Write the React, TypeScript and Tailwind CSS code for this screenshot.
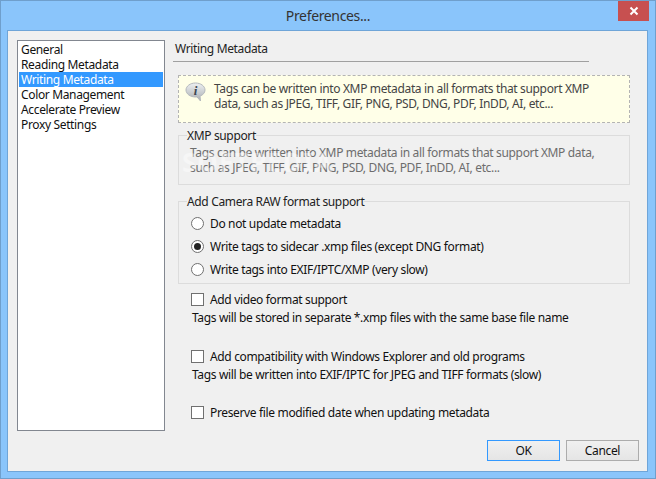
const navItems = [
  'General',
  'Reading Metadata',
  'Writing Metadata',
  'Color Management',
  'Accelerate Preview',
  'Proxy Settings',
];

function InfoIcon() {
  return (
    <svg width="21" height="20" viewBox="0 0 21 20" className="shrink-0 mt-[1px]">
      <defs>
        <linearGradient id="bubble" x1="0" y1="0" x2="0" y2="1">
          <stop offset="0" stopColor="#eef0f2" />
          <stop offset="1" stopColor="#a9aeb3" />
        </linearGradient>
      </defs>
      <path
        d="M10.5 1C5.3 1 1 4.1 1 8s4.3 7 9.5 7c.6 0 1 0 1.500-.1L15.500 19l-.5-4.900C18 13 20 10.700 20 8c0-3.900-4.300-7-9.500-7z"
        fill="url(#bubble)"
        stroke="#b4b8bc"
        strokeWidth="1"
      />
      <text x="10.500" y="13" textAnchor="middle" fontFamily="'Liberation Serif', serif" fontStyle="italic" fontWeight="700" fontSize="13" fill="#3c4650">
        i
      </text>
    </svg>
  );
}

function Radio({ label, checked }: { label: string; checked?: boolean }) {
  return (
    <div className="flex items-center h-[23px]">
      <div className="w-[13px] h-[13px] rounded-full border border-[#707070] bg-white flex items-center justify-center">
        {checked && <div className="w-[7px] h-[7px] rounded-full bg-[#222222]" />}
      </div>
      <span className="ml-[6px] text-[#111111]">{label}</span>
    </div>
  );
}

function Check({ label, className }: { label: string; className?: string }) {
  return (
    <div className={`flex items-center h-[16px] ml-[18px] ${className ?? ''}`}>
      <div className="w-[13px] h-[13px] border border-[#707070] bg-white" />
      <span className="ml-[6px] text-[#111111]">{label}</span>
    </div>
  );
}

export default function App() {
  return (
    <div className="relative w-[656px] h-[479px] bg-[#8ac5fb] border border-[#6f9fcc] flex flex-col overflow-hidden font-['Noto_Sans','Open_Sans',sans-serif] text-[12px] leading-[15px] tracking-[-0.35px] text-[#111111]">
      {/* Title bar */}
      <div className="h-[29px] shrink-0 relative flex items-center justify-center text-[14px] text-[#333333]">
        Preferences...
        <div className="absolute right-[6px] top-0 w-[31px] h-[20px] bg-[#c75050] flex items-center justify-center">
          <svg width="10" height="10" viewBox="0 0 10 10">
            <path d="M1.500 1.500l7 7M8.500 1.500l-7 7" stroke="#fff" strokeWidth="2" />
          </svg>
        </div>
      </div>

      {/* Client area */}
      <div className="ml-[6px] mr-[7px] h-[442px] bg-[#f0f0f0] border border-[#6fa5d8] flex pl-[9px] pt-[9px]">
        <div className="w-[148px] h-[391px] border border-[#828790] bg-white pt-[1px] px-[1px] shrink-0">
          {navItems.map((item) => (
            <div
              key={item}
              className={`h-[15px] pl-[2px] ${item === 'Writing Metadata' ? 'bg-[#3399ff] text-white' : ''}`}
            >
              {item}
            </div>
          ))}
        </div>

        <div className="ml-[8px] w-[466px] flex flex-col">
          {/* Section heading */}
          <div className="h-[22px] w-[416px] border-b border-[#a0a0a0] pl-[2px] pt-[1px] text-[#222222]">
            Writing Metadata
          </div>

          {/* Info box */}
          <div className="ml-[5px] mt-[13px] w-[452px] h-[48px] border border-dashed border-[#b4b4b4] bg-[#ffffe8] flex pl-[6px] pt-[5px] text-[#444444]">
            <InfoIcon />
            <div className="ml-[8px]">
              Tags can be written into XMP metadata in all formats that support XMP
              <br />
              data, such as JPEG, TIFF, GIF, PNG, PSD, DNG, PDF, InDD, AI, etc...
            </div>
          </div>

          {/* XMP support */}
          <fieldset className="relative ml-[5px] mt-[5px] w-[452px] h-[57px] border border-[#dcdcdc] px-[8px] text-[#6d6d6d]">
            <legend className="text-[#222222]">XMP support</legend>
            <div className="ml-[3px] mt-[2px]">
              Tags can be written into XMP metadata in all formats that support XMP data,
              <br />
              such as JPEG, TIFF, GIF, PNG, PSD, DNG, PDF, InDD, AI, etc...
            </div>
            <span className="absolute left-[3px] top-[6px] text-[26px] leading-[26px] font-bold tracking-[1px] text-white opacity-40">
              SOFTPEDIA
            </span>
          </fieldset>

          {/* Camera RAW */}
          <fieldset className="ml-[5px] mt-[9px] w-[452px] h-[90px] border border-[#dcdcdc] px-[12px]">
            <legend className="-ml-[4px] text-[#222222]">Add Camera RAW format support</legend>
            <div className="mt-[3px]">
              <Radio label="Do not update metadata" />
              <Radio label="Write tags to sidecar .xmp files (except DNG format)" checked />
              <Radio label="Write tags into EXIF/IPTC/XMP (very slow)" />
            </div>
          </fieldset>

          {/* Options */}
          <Check label="Add video format support" className="mt-[7px]" />
          <div className="ml-[19px] mt-[3px]">Tags will be stored in separate *.xmp files with the same base file name</div>
          <Check label="Add compatibility with Windows Explorer and old programs" className="mt-[23px]" />
          <div className="ml-[19px] mt-[3px]">Tags will be written into EXIF/IPTC for JPEG and TIFF formats (slow)</div>
          <Check label="Preserve file modified date when updating metadata" className="mt-[22px]" />

          {/* Buttons */}
          <div className="flex justify-end gap-[6px] mt-[20px]">
            <button className="w-[73px] h-[21px] border border-[#3399ff] bg-gradient-to-b from-[#f0f0f0] to-[#e5e5e5] text-[#111111]">OK</button>
            <button className="w-[73px] h-[21px] border border-[#acacac] bg-gradient-to-b from-[#f0f0f0] to-[#e5e5e5] text-[#111111]">Cancel</button>
          </div>
        </div>
      </div>
    </div>
  );
}
